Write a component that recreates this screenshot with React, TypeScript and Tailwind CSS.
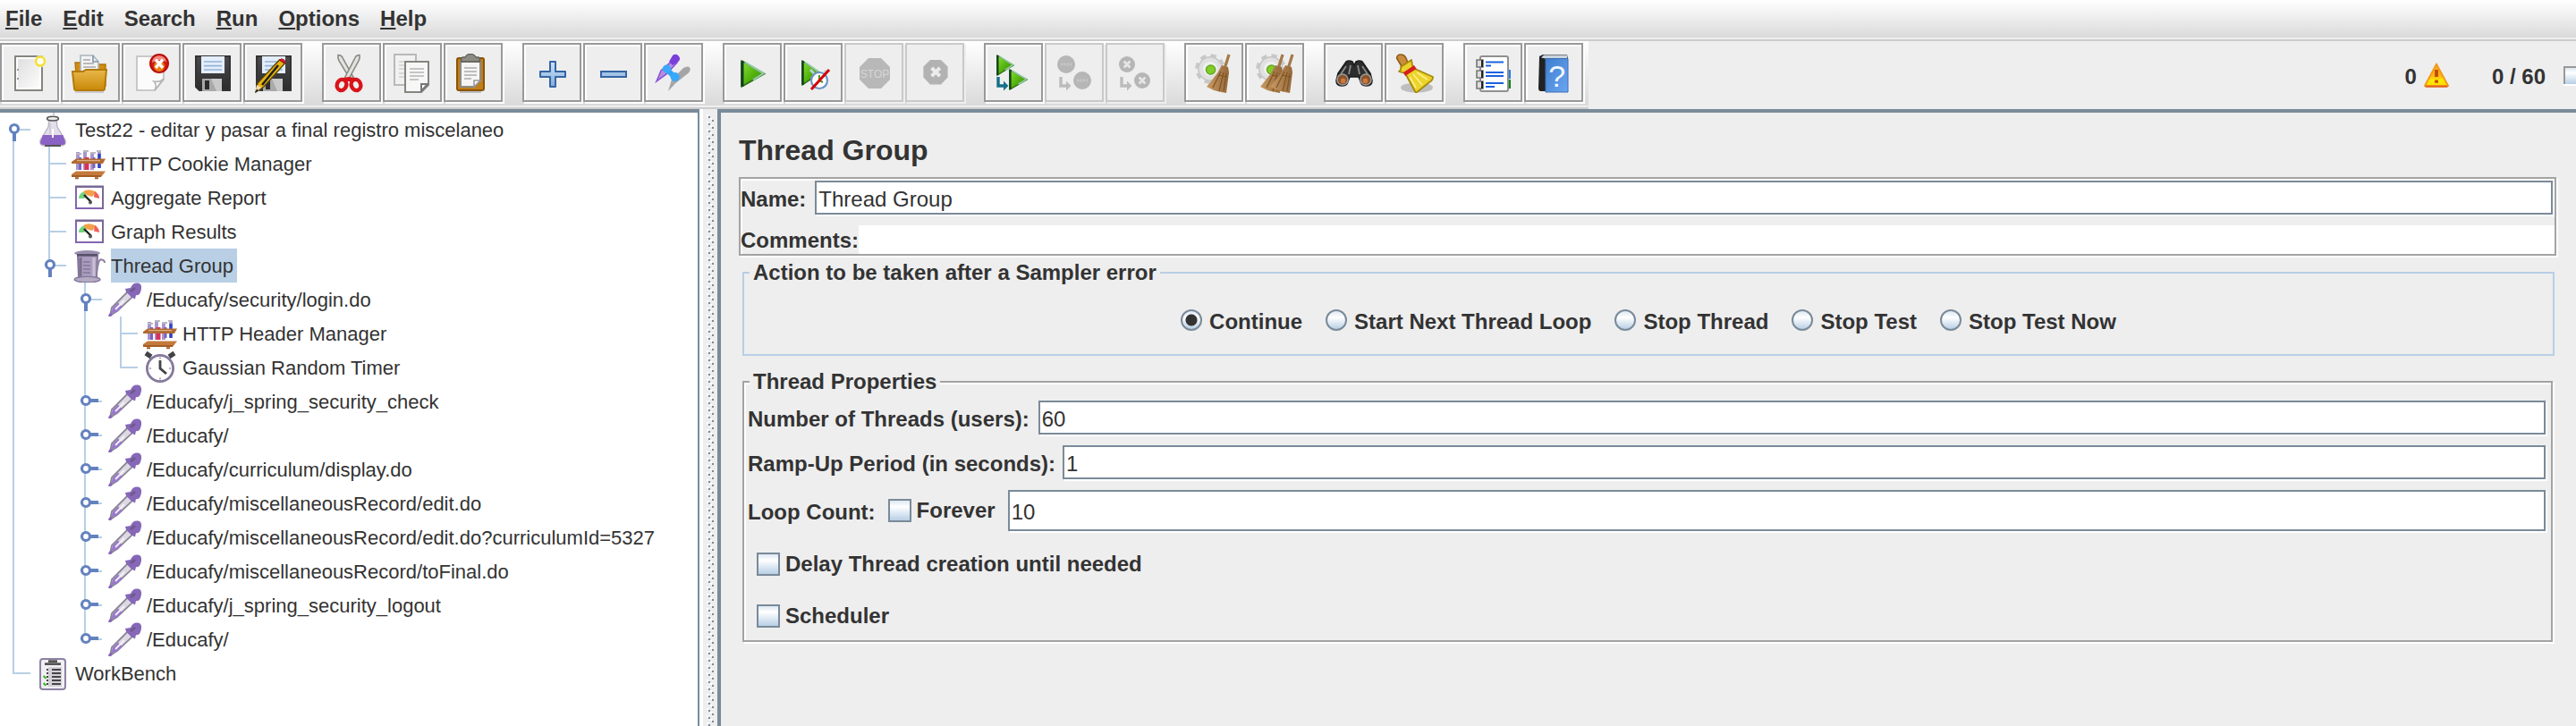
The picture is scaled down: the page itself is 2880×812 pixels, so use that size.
import React from "react";

/* ---------- toolbar icons (22 x 22 grid) ---------- */

const Defs = () => (
  <svg className="absolute h-0 w-0" aria-hidden="true">
    <defs>
      <linearGradient id="green" x1="0" y1="0" x2="1" y2="1">
        <stop offset="0" stopColor="#8be234" />
        <stop offset=".5" stopColor="#55b30e" />
        <stop offset="1" stopColor="#3c7d08" />
      </linearGradient>
      <linearGradient id="blue" x1="0" y1="0" x2="0" y2="1">
        <stop offset="0" stopColor="#d4e4f4" />
        <stop offset="1" stopColor="#7fabdc" />
      </linearGradient>
      <linearGradient id="folder" x1="0" y1="0" x2="0" y2="1">
        <stop offset="0" stopColor="#e8b84a" />
        <stop offset="1" stopColor="#c98908" />
      </linearGradient>
      <linearGradient id="disk" x1="0" y1="0" x2="0" y2="1">
        <stop offset="0" stopColor="#4b4b4e" />
        <stop offset="1" stopColor="#2b2b2d" />
      </linearGradient>
      <linearGradient id="paper" x1="0" y1="0" x2="1" y2="1">
        <stop offset="0" stopColor="#dcdcdc" />
        <stop offset="1" stopColor="#ffffff" />
      </linearGradient>
      <linearGradient id="book" x1="0" y1="0" x2="1" y2="1">
        <stop offset="0" stopColor="#3f7fd0" />
        <stop offset="1" stopColor="#6aa5f0" />
      </linearGradient>
      <linearGradient id="warn" x1="0" y1="0" x2="0" y2="1">
        <stop offset="0" stopColor="#f9a01e" />
        <stop offset=".55" stopColor="#fdb813" />
        <stop offset=".75" stopColor="#ffea00" />
        <stop offset="1" stopColor="#ffd800" />
      </linearGradient>
      <linearGradient id="bristle" x1="0" y1="0" x2="1" y2="0">
        <stop offset="0" stopColor="#c99a62" />
        <stop offset="1" stopColor="#94683a" />
      </linearGradient>
    </defs>
  </svg>
);

const NewIcon = () => (
  <>
    <rect x="2.5" y="1.5" width="15" height="19" fill="url(#paper)" stroke="#85857f" />
    <rect x="3.5" y="2.5" width="13" height="17" fill="none" stroke="#fff" />
    <path d="M3.5 9h1M3.5 14h1" stroke="#999" />
    <circle cx="16.5" cy="4.3" r="3.4" fill="#f5ee8e" opacity=".8" />
    <circle cx="16.5" cy="4.3" r="2.4" fill="#fffef0" stroke="#f3dc2c" />
  </>
);
const OpenIcon = () => (
  <>
    <path d="M2 5h5l1 1h11v12H3z" fill="#cf8d10" stroke="#b0740a" strokeWidth=".7" />
    <path d="M5 1h7l3 3.500v7H5z" fill="#f3f3f3" stroke="#a9b4bc" strokeWidth=".8" />
    <path d="M6.500 3.500h4M6.500 5.500h6M6.500 7.500h7M6.500 9.500h7" stroke="#a8a8a8" strokeWidth=".8" />
    <path d="M12 1v3.500h3" fill="none" stroke="#7e96a8" strokeWidth=".8" />
    <path d="M.500 10h6l1.500-1h11.500l-1 10.500q0 1-1 1H2.500q-1 0-1-1z" fill="url(#folder)" stroke="#b57a08" />
    <path d="M2 21.500h16" stroke="#000" opacity=".15" />
  </>
);
const CloseIcon = () => (
  <>
    <path d="M2.500 1.500h15v13l-5 6h-10z" fill="#fbfbfb" stroke="#c9c9c9" />
    <path d="M12.500 20.500c1-2 .5-4-.5-5 2 .5 4 0 5.500-1.500z" fill="#fff" stroke="#b5b5b5" strokeWidth=".8" />
    <circle cx="15" cy="5.500" r="5" fill="#d41f12" stroke="#b80f0f" />
    <path d="M11 5a4 3.600 0 0 1 8-.5q-4-2-8 .5" fill="#f08a80" />
    <circle cx="15" cy="7" r="3" fill="#e97d14" />
    <path d="M13 3.300l4 4.600M17 3.300l-4 4.600" stroke="#fff" strokeWidth="1.700" />
  </>
);
const SaveIcon = () => (
  <>
    <path d="M1.500 1.500h19v19h-17l-2-2z" fill="url(#disk)" stroke="#333" />
    <rect x="4.500" y="1.500" width="13" height="9.500" fill="#e4eefa" />
    <path d="M6 4.500h10M6 6.800h10M6 9h10" stroke="#93b3d6" strokeWidth=".8" />
    <rect x="5" y="14" width="11" height="7" fill="#a9a9a9" />
    <path d="M10 14h6v7h-3z" fill="#c9c9c9" />
    <rect x="6.500" y="15" width="2.500" height="5" fill="#2b2b2d" />
  </>
);
const SaveAsIcon = () => (
  <>
    <SaveIcon />
    <path d="M14.200 3.500l3 2L5.500 18.500l-4.500 3 1-5z" fill="#e8b511" stroke="#5a4408" strokeWidth=".7" />
    <path d="M13.500 6.500L4.500 17.500" stroke="#222" strokeWidth="1.300" />
    <path d="M14.200 3.500q1-1 2.400-.2t.6 2.200z" fill="#d81c2c" stroke="#a3101c" strokeWidth=".5" />
    <path d="M1.500 17.500l2.800 1.500-3.600 2.400z" fill="#edd9ac" />
    <path d="M.500 21.700l1-2 1 .9z" fill="#222" />
  </>
);
const CutIcon = () => (
  <>
    <path d="M3 .800q2 0 2.500 1.500L12.500 15l-2 .5L3.500 4q-.8-2-.5-3.200z" fill="#e3e3df" stroke="#8c8c88" strokeWidth=".8" />
    <path d="M15 .800q-2 0-2.500 1.500L6.500 14l2 1L14.500 4q.8-2 .5-3.200z" fill="#e3e3df" stroke="#8c8c88" strokeWidth=".8" />
    <ellipse cx="5" cy="17.500" rx="2.600" ry="3.100" fill="none" stroke="#d8141a" strokeWidth="2.200" transform="rotate(20 5 17.500)" />
    <ellipse cx="13" cy="17.500" rx="2.600" ry="3.100" fill="none" stroke="#d8141a" strokeWidth="2.200" transform="rotate(-20 13 17.500)" />
    <path d="M6 13.500l3-.5 3 .5-1.500 2h-3z" fill="#d8141a" />
  </>
);
const CopyIcon = () => (
  <>
    <path d="M.500.500h12v17H.500z" fill="#f1f1f1" stroke="#b9b9b9" />
    <path d="M3 4.500h8M3 6.500h8M3 8.500h8M3 11h8M3 13h8" stroke="#cfcfcf" strokeWidth=".8" />
    <path d="M6.500 4.500h13v13l-4 4h-9z" fill="#f7f7f7" stroke="#858580" />
    <path d="M9 8.500h8M9 10.500h8M9 12.500h8M9 14.500h5" stroke="#b5b5b5" strokeWidth=".8" />
    <path d="M19 17h-3.500v4z" fill="#fff" stroke="#777" />
  </>
);
const PasteIcon = () => (
  <>
    <rect x="1.500" y="2.500" width="15" height="18" rx="1" fill="#c17d18" stroke="#8a5408" />
    <path d="M3.500 4.500h11v10.500l-3.500 3.500H3.500z" fill="#f5f5f5" stroke="#8c8c86" />
    <path d="M5.500 8h7M5.500 10h7M5.500 12h7M5.500 14h4" stroke="#aaa" strokeWidth=".8" />
    <path d="M14.500 15H11v3.500z" fill="#fff" stroke="#999" strokeWidth=".8" />
    <path d="M3.800 4.500V3q0-1 1.200-1h1q1-1.800 3-1.800T12 2h1q1.200 0 1.200 1v1.500z" fill="#8c8c82" stroke="#5f5f5a" strokeWidth=".7" />
    <path d="M3 21.500h12" stroke="#000" opacity=".2" />
  </>
);
const PlusIcon = () => (
  <path d="M9.500 4.500h3v5.500h5.500v3h-5.500v5.500h-3v-5.500H4v-3h5.500z" fill="url(#blue)" stroke="#3465a4" strokeLinejoin="round" />
);
const MinusIcon = () => <rect x="4" y="10" width="14" height="3" fill="#a3c2e6" stroke="#3465a4" />;
const ToggleIcon = () => (
  <>
    <path d="M1 15.500l2.500-6L11 3l1.500 2-6 6.500z" fill="#b58ee0" stroke="#8a55d6" strokeWidth=".8" />
    <path d="M8 4.500l2-3.500q2-1.500 3.500.5t-1 3.500l-2.500 1.500z" fill="#7a3fd8" />
    <path d="M7.500 21l2-6.500L16 8q2.500-1.500 3.500-.2t-.8 3.200l-7 5.500z" fill="#a5a5a5" />
    <path d="M6.500 8.500l3.500 3.500 3 2.500" stroke="#2fa4fb" strokeWidth="3" />
    <circle cx="6.700" cy="8.500" r="2.300" fill="#38a9fc" />
    <circle cx="11.300" cy="13" r="2.500" fill="#38a9fc" />
  </>
);
const Tri = ({ x, y, w, h }: { x: number; y: number; w: number; h: number }) => (
  <svg x={x} y={y} width={w} height={h} viewBox="0 0 12 15" preserveAspectRatio="none">
    <path d="M.6.6L11.400 7.500.6 14.400z" fill="url(#green)" stroke="#2f6f13" strokeWidth=".8" />
    <path d="M.8.600v13.800" stroke="#12401c" strokeWidth="1.400" />
    <path d="M2 1.300L11 7.300l-5 3.500" fill="none" stroke="#8fc9a5" strokeWidth="1" />
  </svg>
);
const StartIcon = () => <Tri x={4} y={3.500} w={14} h={15.500} />;
const StartNoTimersIcon = () => (
  <>
    <Tri x={4} y={3.500} w={11} h={14.500} />
    <circle cx="14" cy="15" r="4.500" fill="#fff" stroke="#6a94c8" strokeWidth="1.100" />
    <path d="M14 12v3l2 1" fill="none" stroke="#4c8f2c" />
    <path d="M9 9l2 2M18 9.500l-1.500 1.500" stroke="#b8cde4" strokeWidth="1.500" />
    <path d="M9.500 20L19.500 9" stroke="#d40000" strokeWidth="1.500" />
  </>
);
const StopIcon = () => (
  <>
    <path d="M7.500 2.500h7l5 5v7l-5 5h-7l-5-5v-7z" fill="#b8b8b8" />
    <text x="11" y="13.500" textAnchor="middle" fontSize="6" fontWeight="400" fill="#d6d6d6">
      STOP
    </text>
  </>
);
const ShutdownIcon = () => (
  <>
    <path d="M8 3.500h6l3.800 3.800v6L14 17.200H8l-3.800-3.900v-6z" fill="#b2b2b2" />
    <path d="M8.800 8l4.600 4.600M13.400 8l-4.600 4.600" stroke="#ececec" strokeWidth="2" />
  </>
);
const Hook = ({ color }: { color: string }) => (
  <>
    <path d="M2 13v5h4.500" fill="none" stroke={color} strokeWidth="1.700" />
    <path d="M5 15.200l2.700 2.800-2.700 2.800z" fill={color} />
  </>
);
const RemoteStartIcon = () => (
  <>
    <Hook color="#15708a" />
    <Tri x={1} y={0.500} w={10} h={12} />
    <Tri x={8} y={8.500} w={10.500} h={12} />
  </>
);
const RemoteStopIcon = () => (
  <>
    <circle cx="6" cy="6" r="5" fill="#b6b6b6" />
    <circle cx="15" cy="15" r="5" fill="#b6b6b6" />
    <path d="M3 6h6M12 15h6" stroke="#c6c6c6" strokeWidth="1.500" strokeDasharray="1.200 .5" />
    <g transform="translate(1 0)">
      <Hook color="#bcbcbc" />
    </g>
  </>
);
const RemoteShutdownIcon = () => (
  <>
    <circle cx="6" cy="6" r="4.500" fill="#b6b6b6" />
    <circle cx="14.500" cy="15" r="4.500" fill="#b6b6b6" />
    <path d="M4.300 4.300l3.400 3.400M7.700 4.300L4.300 7.700M12.800 13.300l3.400 3.400M16.200 13.300l-3.400 3.400" stroke="#e6e6e6" strokeWidth="1.400" />
    <g transform="translate(1 0)">
      <Hook color="#bcbcbc" />
    </g>
  </>
);
const Gear = () => (
  <>
    <circle cx="8.500" cy="8.500" r="7" fill="none" stroke="#c8c8c8" strokeWidth="2.800" strokeDasharray="3 2.500" />
    <circle cx="8.500" cy="8.500" r="6.600" fill="#e0e0e0" stroke="#c4c4c4" strokeWidth=".7" />
    <circle cx="8.500" cy="8.500" r="4" fill="#efefef" />
    <circle cx="8.800" cy="9" r="2.600" fill="#80cc28" stroke="#5ea01a" strokeWidth=".6" />
  </>
);
const Straw = ({ dx }: { dx: number }) => (
  <g transform={`translate(${dx} 0)`}>
    <path d="M18.500.500l-2.500 8" stroke="#a5794a" strokeWidth="1.600" />
    <path d="M14.500 6.500l3.500 1 .5 3-1.500 11.500-4-.8-3-.7-4-2L12 11z" fill="url(#bristle)" />
    <path d="M14 10l-4.500 9M15.500 10.500L13 21M17 11l-1.500 10M12.500 12l5 1" stroke="#7f5527" strokeWidth=".6" />
  </g>
);
const ClearIcon = () => (
  <>
    <Gear />
    <Straw dx={0.500} />
  </>
);
const ClearAllIcon = () => (
  <>
    <Gear />
    <Straw dx={-3.500} />
    <Straw dx={2} />
  </>
);
const SearchIcon = () => (
  <>
    <path d="M6.500 4.500q1.500-1 3.500 0l1 2 1-2q2-1 3.500 0L20 11l1 4q0 3-3 3t-3.500-2.500l-1-2.500h-5l-1 2.500Q7 18 4 18t-3-3l1-4z" fill="#2d2d2d" stroke="#1c1c1c" strokeWidth=".8" />
    <path d="M6.500 7l-3 4.500M9 6.500l-1 5M15.500 7l3 4.500M13 6.500l1 5" stroke="#8a8a8a" strokeWidth=".9" />
    <circle cx="4.500" cy="14.500" r="3" fill="#8c5128" stroke="#9a9a9a" strokeWidth=".8" />
    <circle cx="17.500" cy="14.500" r="3" fill="#8c5128" stroke="#9a9a9a" strokeWidth=".8" />
    <circle cx="4.800" cy="15.200" r="1.400" fill="#c97a3e" />
    <circle cx="17.200" cy="15.200" r="1.400" fill="#c97a3e" />
  </>
);
const ResetIcon = () => (
  <>
    <ellipse cx="12" cy="19" rx="9" ry="2.800" fill="#000" opacity=".2" />
    <path d="M.800 2.500Q1 .5 3 .500t3 2l1.500 4-3.500 1.500z" fill="#c98d3c" stroke="#8d5b1a" strokeWidth=".8" />
    <path d="M2 10q1.500-1 1-2.500L9 3.500l.5 3 1.500 2 10 4.500q0 2-2 3l-7.500 6-6-11z" fill="#ecd32a" stroke="#a58a0c" strokeWidth=".9" strokeLinejoin="round" />
    <path d="M4.500 10.500L10.500 6.500l1.300 2-6.300 4z" fill="#d61f1f" />
    <path d="M8 13l3.500 6M10 11.500l5 6M12 10.500l6 4" stroke="#fbf08c" strokeWidth=".8" />
  </>
);
const FunctionIcon = () => (
  <>
    <rect x="17" y="9" width="3.500" height="5" fill="#2c7ee8" />
    <rect x="17" y="14.500" width="3.500" height="5" fill="#0a8a12" />
    <rect x="3.500" y="1.500" width="15.500" height="19.500" rx="1" fill="#fff" stroke="#8f8f8f" />
    <path d="M6.500 4.700h10M6.500 6.700h3M6.500 10.500h10M6.500 12.500h10M6.500 16.500h10M6.500 18.500h5" stroke="#1a62e0" strokeWidth="1" />
    <path d="M1.500 3.500H5v4H1.500zM1.500 9.500H5v4H1.500zM1.500 15.500H5v4H1.500z" fill="#ddd" stroke="#777" strokeWidth=".8" />
    <path d="M4.500 3.500v4M4.500 9.500v4M4.500 15.500v4" stroke="#222" />
  </>
);
const HelpIcon = () => (
  <>
    <path d="M2.500 1.500L4.500.5H18l.5 2.500v18H3q-1-.2-1-1.500z" fill="#222" />
    <path d="M3.500 2.200L5 .800h13v2H6z" fill="#c9d4df" />
    <path d="M6 2.800h12.500V21.500H6z" fill="url(#book)" stroke="#3b6fb5" strokeWidth=".5" />
    <text x="12.300" y="18.500" textAnchor="middle" fontSize="17" fontWeight="400" fill="#f2f7ff">
      ?
    </text>
  </>
);

type Tool = { label: string; icon: () => React.JSX.Element; off?: boolean };
const TOOLS: Tool[][] = [
  [
    { label: "New", icon: NewIcon },
    { label: "Open", icon: OpenIcon },
    { label: "Close", icon: CloseIcon },
    { label: "Save", icon: SaveIcon },
    { label: "Save as", icon: SaveAsIcon },
  ],
  [
    { label: "Cut", icon: CutIcon },
    { label: "Copy", icon: CopyIcon },
    { label: "Paste", icon: PasteIcon },
  ],
  [
    { label: "Expand all", icon: PlusIcon },
    { label: "Collapse all", icon: MinusIcon },
    { label: "Toggle", icon: ToggleIcon },
  ],
  [
    { label: "Start", icon: StartIcon },
    { label: "Start no pauses", icon: StartNoTimersIcon },
    { label: "Stop", icon: StopIcon, off: true },
    { label: "Shutdown", icon: ShutdownIcon, off: true },
  ],
  [
    { label: "Remote start all", icon: RemoteStartIcon },
    { label: "Remote stop all", icon: RemoteStopIcon, off: true },
    { label: "Remote shutdown all", icon: RemoteShutdownIcon, off: true },
  ],
  [
    { label: "Clear", icon: ClearIcon },
    { label: "Clear all", icon: ClearAllIcon },
  ],
  [
    { label: "Find", icon: SearchIcon },
    { label: "Reset search", icon: ResetIcon },
  ],
  [
    { label: "Function helper", icon: FunctionIcon },
    { label: "Help", icon: HelpIcon },
  ],
];

/* ---------- tree icons (19 x 19 grid) ---------- */

const FlaskIcon = () => (
  <>
    <path d="M7.500 3.500L7 8l-4.500 7.500q-.5 3 2.500 3h9q3 0 2.500-3L12 8l-.5-4.500z" fill="#e3dfea" stroke="#b9b4c4" strokeWidth=".7" />
    <path d="M4 12.500h11.200l1.300 4q.2 1.500-1.500 1.500H4.500Q2.500 18 2.500 16.500z" fill="#8a63c4" />
    <path d="M5 18.500h9" stroke="#555" />
    <ellipse cx="9.500" cy="3.300" rx="3.200" ry="1.200" fill="#eee" stroke="#555" strokeWidth=".8" />
    <path d="M10 0v2M8 6v6" stroke="#cfcbd6" />
    <path d="M9.500 9v5" stroke="#fff" />
  </>
);
const RackIcon = () => (
  <>
    <path d="M3.500 3v10M7.500 3v10M11.500 3v10M15.500 3v9" stroke="#a896cc" strokeWidth="2" />
    <path d="M8.500 6v7" stroke="#d8305c" strokeWidth="2.500" />
    <path d="M15.500 4v8" stroke="#2b45c9" strokeWidth="1.600" />
    <path d="M12.500 6v6M4.800 6v7" stroke="#7c5fc0" strokeWidth="1.500" />
    <path d="M2.500 4h3M6.500 2.500h3M10.500 3.500h3M14 2.500h2.500" stroke="#b9b7c2" />
    <path d="M0 8.500l2.500-1.800h16.500l-1.500 2.800H0z" fill="#b26a30" />
    <path d="M3 7.800h13" stroke="#dcae84" strokeWidth=".6" />
    <path d="M0 15.500l2.500-1.800h16.500l-2.500 3.300H0z" fill="#c47a3c" />
    <path d="M0 16.500h16.500M2 17.600h2M13 17.600h2" stroke="#a35c24" />
  </>
);
const GaugeIcon = () => (
  <>
    <rect x="2.500" y="3.500" width="15" height="12" fill="#fff" stroke="#8465b3" />
    <path d="M2 3.300h16M17.500 4v12" stroke="#776a90" />
    <path d="M4 10q0-3 3.500-4l1 3.500-2 .5z" fill="#6fd67a" />
    <path d="M6.500 6q3.500-2 7.500.5L11.500 9 8 8z" fill="#f3a14c" />
    <path d="M13 6q2.500 1.500 2.500 4l-3-.7z" fill="#f2605c" />
    <path d="M7 8l4 4" stroke="#222" strokeWidth="1.200" />
    <circle cx="10.500" cy="12.200" r="1" fill="#555" />
  </>
);
const SpoolIcon = () => (
  <>
    <path d="M3.500 4h11l-.5 12H4z" fill="#a99cbc" stroke="#85789c" />
    <path d="M5 5v11" stroke="#7c708f" strokeWidth="1.600" />
    <path d="M12.500 5v11" stroke="#c8bfd6" strokeWidth="1.600" />
    <path d="M6.500 7.500h4M6.500 9.500h4M6.500 11.500h4M6.500 13.500h4" stroke="#83779b" strokeWidth=".8" />
    <ellipse cx="8.800" cy="2.500" rx="7.200" ry="1.500" fill="#9a8eb0" />
    <path d="M3 3.600h11.500" stroke="#59516a" strokeWidth="1.200" />
    <ellipse cx="8.800" cy="17.300" rx="7.200" ry="1.600" fill="#b4abc3" stroke="#85789c" strokeWidth=".7" />
    <path d="M14 13l1-5q.5-2 2-1.800T18.500 8" fill="none" stroke="#8d82a3" />
  </>
);
const DropperIcon = () => (
  <>
    <path d="M1.500 18.500l1-4.500L12 4.500 14.800 7.300 5.500 16z" fill="#dcd9e2" stroke="#8b8696" strokeWidth=".9" />
    <path d="M2 17.500l1-3.300 3-3 2.500 2.500-3 2.300z" fill="#9878cc" />
    <path d="M4.500 15l5-5" stroke="#f4f2f8" strokeWidth=".9" />
    <path d="M10 3.500l3-.5q1-3 3.800-2.800T18.900 4 16 7l-.5 2.200-2-1-3-3z" fill="#8667b8" />
    <path d="M13 5l2.500-2" stroke="#6b5a86" strokeWidth="1.200" />
    <path d="M1 19l1.500-1.800" stroke="#8667b8" strokeWidth="1.600" />
  </>
);
const TimerIcon = () => (
  <>
    <path d="M1.500 1.500l3 2M17.500 1.500l-3 2" stroke="#444" strokeWidth="2.600" />
    <circle cx="9.500" cy="10" r="7.300" fill="#fff" stroke="#85789c" strokeWidth="1.400" />
    <path d="M9.500 5.500V10l3.500 3" fill="none" stroke="#444" strokeWidth="1.400" />
    <path d="M9.500 3.800v1M3.500 10h1M14.500 10h1M9.500 15.200v1" stroke="#999" strokeWidth=".8" />
  </>
);
const BenchIcon = () => (
  <>
    <rect x="2.500" y="1.500" width="14" height="17" rx="1.500" fill="#f1eff4" stroke="#8d82a3" />
    <rect x="7" y="6" width="7.500" height="11" fill="#d3d0da" />
    <path d="M5 4.300h9M7 2.800h5" stroke="#555" strokeWidth="1.300" />
    <path d="M6 7.500h1M9 7.500h5M6 9.500h1M9 9.500h5M6 11.500h1M9 11.500h5M6 13.500h1M9 13.500h5M6 15.500h1M9 15.500h5" stroke="#444" />
    <path d="M4.300 11l1.400 1.400M4.300 15l1.400 1.400" stroke="#35b51e" />
  </>
);

/* ---------- tree ---------- */

type Guide = "none" | "full" | "start" | "end";
type Handle = "open" | "closed" | undefined;
type Row = { label: string; icon: () => React.JSX.Element; guides: Guide[]; handle?: Handle; selected?: boolean };

const sampler = (label: string, last = false): Row => ({
  label,
  icon: DropperIcon,
  guides: ["full", "none", last ? "end" : "full"],
  handle: "closed",
});

const ROWS: Row[] = [
  { label: "Test22 - editar y pasar a final registro miscelaneo", icon: FlaskIcon, guides: ["start"], handle: "open" },
  { label: "HTTP Cookie Manager", icon: RackIcon, guides: ["full", "full"] },
  { label: "Aggregate Report", icon: GaugeIcon, guides: ["full", "full"] },
  { label: "Graph Results", icon: GaugeIcon, guides: ["full", "full"] },
  { label: "Thread Group", icon: SpoolIcon, guides: ["full", "end"], handle: "open", selected: true },
  { label: "/Educafy/security/login.do", icon: DropperIcon, guides: ["full", "none", "full"], handle: "open" },
  { label: "HTTP Header Manager", icon: RackIcon, guides: ["full", "none", "full", "full"] },
  { label: "Gaussian Random Timer", icon: TimerIcon, guides: ["full", "none", "full", "end"] },
  sampler("/Educafy/j_spring_security_check"),
  sampler("/Educafy/"),
  sampler("/Educafy/curriculum/display.do"),
  sampler("/Educafy/miscellaneousRecord/edit.do"),
  sampler("/Educafy/miscellaneousRecord/edit.do?curriculumId=5327"),
  sampler("/Educafy/miscellaneousRecord/toFinal.do"),
  sampler("/Educafy/j_spring_security_logout"),
  sampler("/Educafy/", true),
  { label: "WorkBench", icon: BenchIcon, guides: ["end"] },
];

const GuideCell = ({ guide, tick, handle }: { guide: Guide; tick: boolean; handle?: Handle }) => {
  const top = guide === "start" ? 19 : 0;
  const bottom = guide === "end" ? 20 : 38;
  return (
    <svg width="40" height="38" className="shrink-0" aria-hidden="true">
      {guide !== "none" && <rect x="14" y={top} width="2" height={bottom - top} fill="#b8cfe5" />}
      {tick && <rect x="14" y="18" width="20" height="2" fill="#b8cfe5" />}
      {handle && (
        <>
          <rect
            x={handle === "open" ? 14 : 20}
            y={handle === "open" ? 22 : 16}
            width={handle === "open" ? 4 : 10}
            height={handle === "open" ? 10 : 4}
            fill="#6382bf"
          />
          <circle cx="16" cy="18" r="4.500" fill="#fff" stroke="#6382bf" strokeWidth="3.200" />
        </>
      )}
    </svg>
  );
};

const Tree = () => (
  <ul role="tree" className="min-w-0 flex-1">
    {ROWS.map((row, i) => {
      const Icon = row.icon;
      return (
        <li key={i} role="treeitem" aria-selected={!!row.selected} className="flex h-[38px] items-center">
          {row.guides.map((g, k) => {
            const last = k === row.guides.length - 1;
            return <GuideCell key={k} guide={g} tick={last} handle={last ? row.handle : undefined} />;
          })}
          <svg width="38" height="38" viewBox="0 0 19 19" fill="none" className="mr-1.5 shrink-0" aria-hidden="true">
            <Icon />
          </svg>
          <span
            className={
              row.selected
                ? "bg-[#b8cfe5] pt-0.5 pr-1 text-[22px] leading-9 whitespace-nowrap"
                : "pt-0.5 pr-1 text-[22px] leading-9 whitespace-nowrap"
            }
          >
            {row.label}
          </span>
        </li>
      );
    })}
  </ul>
);

/* ---------- form pieces ---------- */

const FIELD =
  "min-w-0 flex-1 border-2 border-[#7a8a99] bg-white pt-1 pl-0.5 text-2xl leading-7 outline-none shadow-[2px_2px_0_#fff]";
const ETCHED = "border-2 border-[#a3a3a3] shadow-[2px_2px_0_#fff,inset_2px_2px_0_#fff]";

const Check = ({ id, label }: { id: string; label: string }) => (
  <div className="flex items-center gap-1.5">
    <input
      id={id}
      type="checkbox"
      className="size-[26px] appearance-none border-2 border-[#7a8a99] bg-linear-to-b from-[#dde8f3] via-white via-30% to-[#b8cfe5]"
    />
    <label htmlFor={id} className="pt-0.5 pb-0.5">
      {label}
    </label>
  </div>
);

const ACTIONS = ["Continue", "Start Next Thread Loop", "Stop Thread", "Stop Test", "Stop Test Now"];
const MENUS = ["File", "Edit", "Search", "Run", "Options", "Help"];

export default function App() {
  return (
    <div className="flex min-h-screen flex-col overflow-hidden bg-[#eeeeee] font-['Liberation_Sans',Arial,sans-serif] text-2xl leading-7 font-bold text-[#333333]">
      <Defs />
      <nav className="border-b-2 border-[#cccccc] pb-0.5">
        <div className="flex h-[42px] items-center gap-[23px] bg-linear-to-b from-white to-[#dadada] pl-1.5">
          {MENUS.map((m) => (
            <button key={m} type="button">
              {m === "Search" ? (
                m
              ) : (
                <>
                  <span className="underline decoration-2 underline-offset-2 [text-decoration-skip-ink:none]">{m[0]}</span>
                  {m.slice(1)}
                </>
              )}
            </button>
          ))}
        </div>
      </nav>

      <div className="flex items-stretch justify-between">
        <div className="border-b-2 border-[#cccccc] pb-0.5">
          <div className="flex h-[72px] gap-5 bg-linear-to-b from-white to-[#dadada] pt-0.5 pr-1">
            {TOOLS.map((group, i) => (
              <div key={i} className="flex gap-0.5 pr-0.5">
                {group.map(({ label, icon: Icon, off }) => (
                  <button
                    key={label}
                    type="button"
                    aria-label={label}
                    disabled={off}
                    className="grid size-[66px] place-items-center border-2 border-[#999999] bg-[#eeeeee] shadow-[2px_2px_0_#fff,inset_2px_2px_0_#fff] disabled:border-[#c9c9c9] disabled:shadow-[2px_2px_0_#eee]"
                  >
                    <svg width="44" height="44" viewBox="0 0 22 22" fill="none" className="mt-0.5 ml-0.5">
                      <Icon />
                    </svg>
                  </button>
                ))}
              </div>
            ))}
          </div>
        </div>
        <div className="flex items-center">
          <span className="pt-1">0</span>
          <svg width="28" height="28" viewBox="0 0 14 14" className="ml-2" role="img" aria-label="Warnings">
            <path d="M7 .8L13.500 13H.5z" fill="url(#warn)" stroke="#f09a1c" strokeLinejoin="round" />
            <path d="M.8 13.400h12.400" stroke="#e0641a" />
            <path d="M7 4v4M7 9.800v1.600" stroke="#c04a08" strokeWidth="1.900" />
          </svg>
          <span className="ml-12 pt-1">0 / 60</span>
          <span className="ml-5 h-5 w-3.5 border-t-2 border-l-2 border-[#999999] bg-linear-to-b from-[#dde8f3] via-white via-30% to-[#b8cfe5] shadow-[0_2px_0_#fff]" />
        </div>
      </div>

      <main className="flex flex-1">
        <section className="flex w-[782px] shrink-0 border-t-4 border-r-2 border-[#7a8a99] bg-white font-normal">
          <Tree />
        </section>
        <div className="flex w-5 shrink-0 border-l-4 border-white pt-1.5 pl-1">
          <svg width="8" className="h-full" aria-hidden="true">
            <defs>
              <pattern id="bumps" width="8" height="8" patternUnits="userSpaceOnUse">
                <rect width="2" height="2" fill="#fff" />
                <rect x="2" y="2" width="2" height="2" fill="#7a8a99" />
                <rect x="4" y="4" width="2" height="2" fill="#fff" />
                <rect x="6" y="6" width="2" height="2" fill="#7a8a99" />
              </pattern>
            </defs>
            <rect width="8" height="100%" fill="url(#bumps)" />
          </svg>
        </div>

        <form className="flex min-w-0 flex-1 flex-col border-t-4 border-l-4 border-[#7a8a99] pt-[22px] pr-[22px] pl-5">
          <h1 className="text-[32px] leading-10">Thread Group</h1>

          <div className={`mt-2.5 ${ETCHED}`}>
            <div className="flex items-center gap-2.5 pt-0.5 pr-0.5">
              <label htmlFor="name" className="pt-1">
                Name:
              </label>
              <input id="name" defaultValue="Thread Group" className={`${FIELD} h-[38px] font-normal`} />
            </div>
            <div className="mt-3 flex items-center">
              <label htmlFor="comments" className="pt-0.5">
                Comments:
              </label>
              <input id="comments" className="h-8 min-w-0 flex-1 bg-white font-normal outline-none" />
            </div>
          </div>

          <fieldset className="mt-[5px] mr-0.5 ml-1 h-[107px] border-2 border-[#b8cfe5] px-1.5">
            <legend className="px-1">Action to be taken after a Sampler error</legend>
            <div className="flex justify-center gap-[26px] pt-[23px]">
              {ACTIONS.map((a, i) => (
                <label key={a} className="flex items-center gap-2">
                  <input
                    type="radio"
                    name="action"
                    defaultChecked={i === 0}
                    className="size-6 appearance-none rounded-full border-2 border-[#7a8a99] bg-[linear-gradient(#dde8f3,#fff_35%,#b8cfe5)] checked:bg-[radial-gradient(circle,#333_0_6px,transparent_7px),linear-gradient(#dde8f3,#fff_35%,#b8cfe5)]"
                  />
                  <span className="pt-1">{a}</span>
                </label>
              ))}
            </div>
          </fieldset>

          <fieldset className={`mt-[15px] mr-1 ml-1 pr-1.5 pb-[11px] pl-1 ${ETCHED}`}>
            <legend className="ml-0.5 bg-[#eeeeee] px-1">Thread Properties</legend>
            <div className="flex flex-col gap-3 pt-[7px]">
              <div className="flex items-center gap-2.5">
                <label htmlFor="threads" className="pt-1">
                  Number of Threads (users):
                </label>
                <input id="threads" defaultValue="60" className={`${FIELD} h-[38px] font-normal`} />
              </div>
              <div className="flex items-center gap-2">
                <label htmlFor="ramp" className="pt-1">
                  Ramp-Up Period (in seconds):
                </label>
                <input id="ramp" defaultValue="1" className={`${FIELD} h-[38px] font-normal`} />
              </div>
              <div className="flex items-center gap-3.5">
                <label htmlFor="loops" className="pt-1">
                  Loop Count:
                </label>
                <Check id="forever" label="Forever" />
                <input id="loops" defaultValue="10" className={`${FIELD} h-[46px] font-normal`} />
              </div>
            </div>
            <div className="flex flex-col gap-[26px] pt-[21px] pl-2.5">
              <Check id="delay" label="Delay Thread creation until needed" />
              <Check id="scheduler" label="Scheduler" />
            </div>
          </fieldset>
        </form>
      </main>
    </div>
  );
}
